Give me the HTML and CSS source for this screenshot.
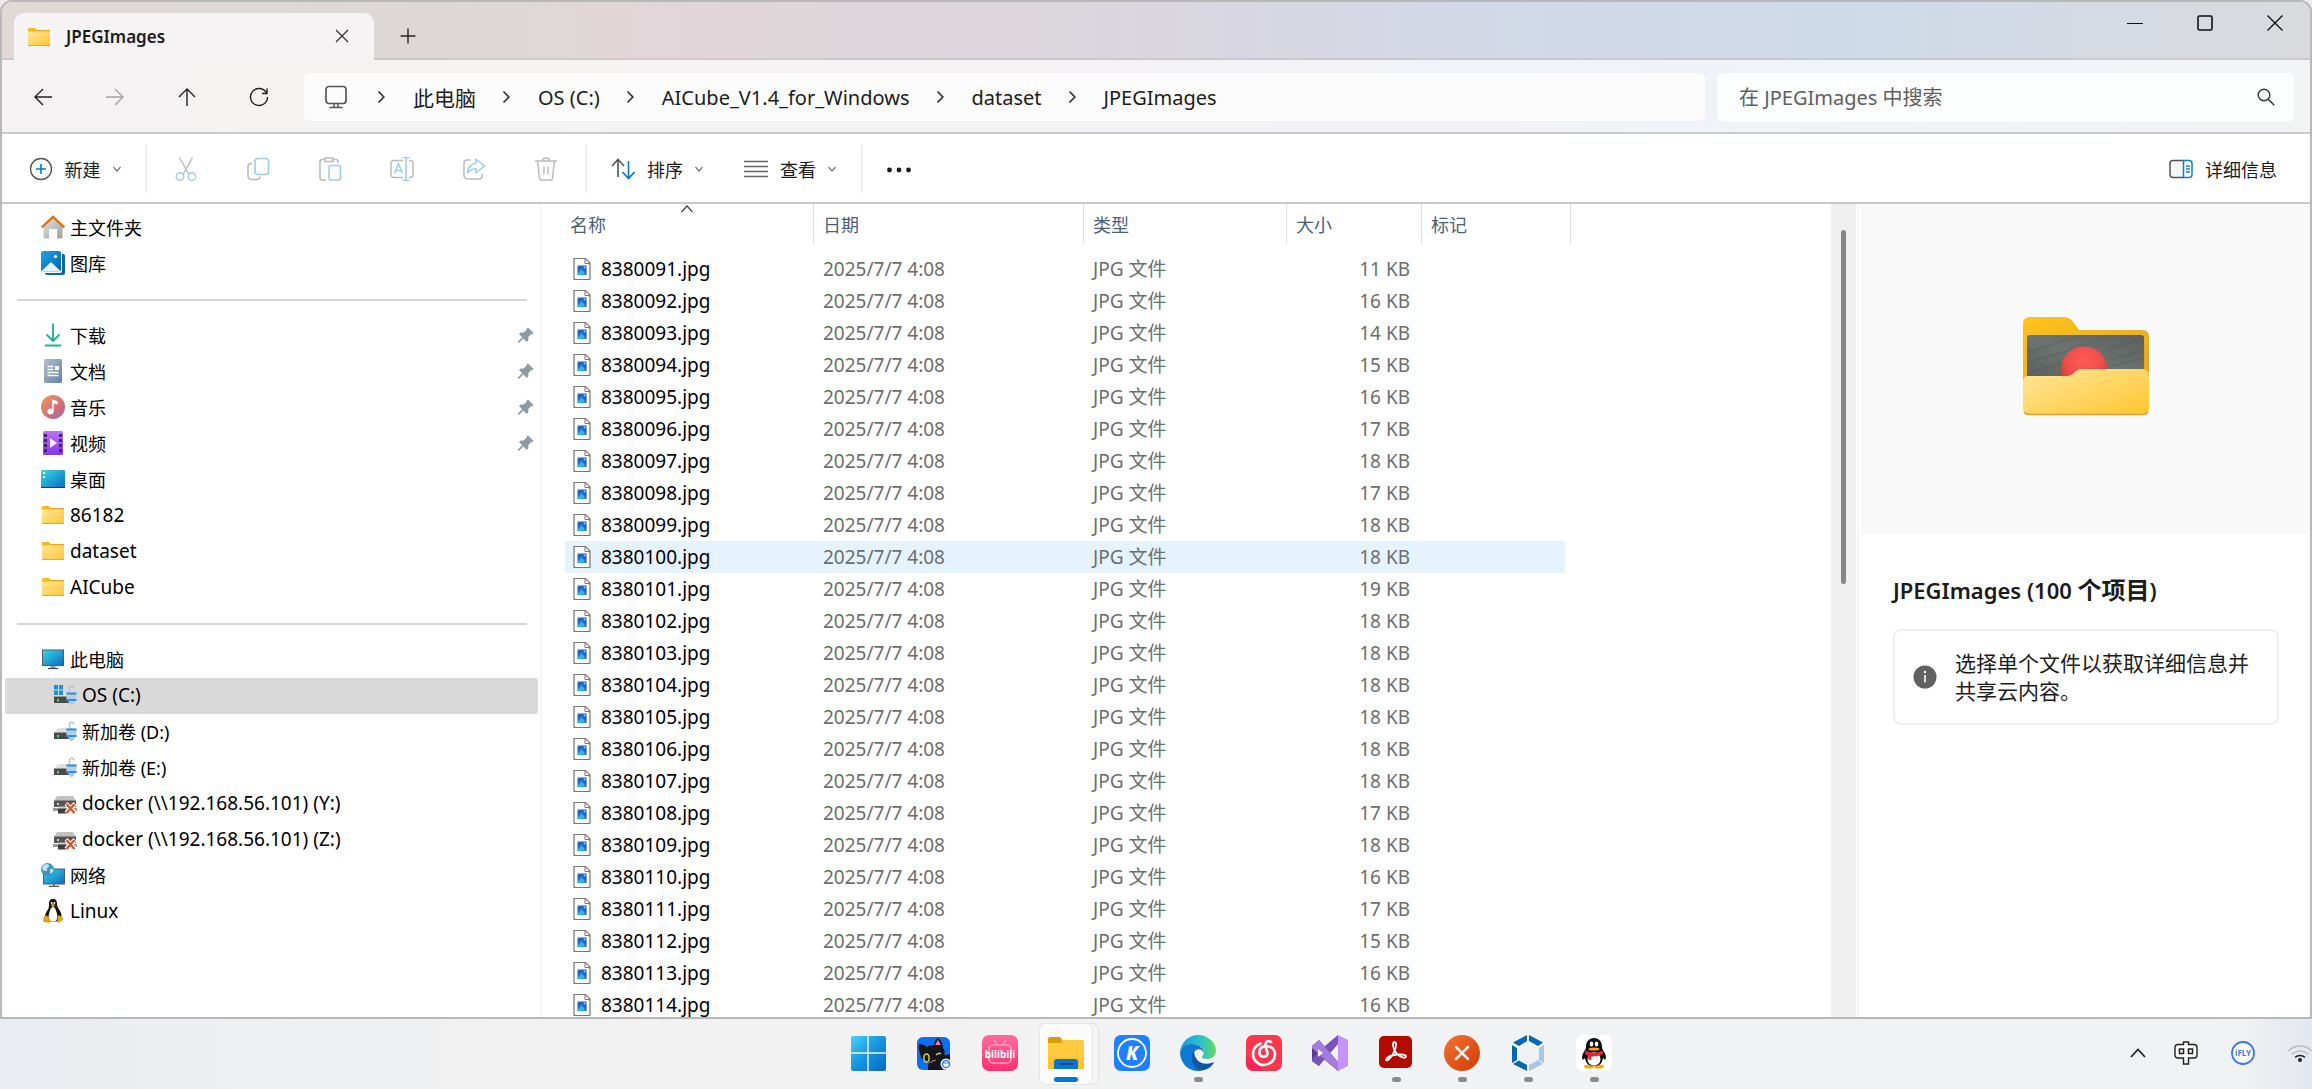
FILE: index.html
```html
<!DOCTYPE html>
<html lang="zh-CN">
<head>
<meta charset="utf-8">
<title>JPEGImages</title>
<link rel="stylesheet" href="styles.css">
</head>
<body>
<svg class="defs" aria-hidden="true">
  <defs>
    <linearGradient id="gFolder" x1="0" y1="0" x2="1" y2="1"><stop offset="0" stop-color="#ffe69c"/><stop offset="1" stop-color="#ffc52e"/></linearGradient>
    <linearGradient id="gScreen" x1="0" y1="0" x2="1" y2="1"><stop offset="0" stop-color="#35d9e6"/><stop offset="1" stop-color="#0a6cc4"/></linearGradient>
    <linearGradient id="gBlue" x1="0" y1="0" x2="1" y2="1"><stop offset="0" stop-color="#1ba5ea"/><stop offset="1" stop-color="#0561b4"/></linearGradient>
    <linearGradient id="gGrey" x1="0" y1="0" x2="1" y2="1"><stop offset="0" stop-color="#e2e2e2"/><stop offset="1" stop-color="#a0a0a0"/></linearGradient>
  </defs>
  <symbol id="chev-down" viewBox="0 0 8 8"><path d="M0.500 2l3.500 4 3.500-4" fill="none" stroke="#777" stroke-width="1.200"/></symbol>
  <symbol id="chev-right" viewBox="0 0 8 14"><path d="M1.500 1.500L6.800 7l-5.300 5.500" fill="none" stroke="#333" stroke-width="1.700"/></symbol>
  <symbol id="folder" viewBox="0 0 24 24"><path d="M1 4.500C1 3.500 1.500 3 2.300 3H8l2 2.500h13V12H1z" fill="#fbb914"/><path d="M1 6.500h22V20a1 1 0 0 1-1 1H2a1 1 0 0 1-1-1z" fill="url(#gFolder)"/><path d="M1 20.500h22" stroke="#eba926" stroke-width="1"/><path d="M9.500 5.500h13.500" stroke="#e9a81c"/></symbol>
  <symbol id="pin" viewBox="0 0 16 16"><path d="M10 0.500l5.500 5.500-1.300 1.400-1-.3-3 3.200.2 3-1.600 1.700-3.500-3.500L1.200 15.800H0v-1.200l4.300-4.300L1 7l1.600-1.500 3 .1 3.200-3-.2-1z" fill="#8f9aa3"/></symbol>
  <symbol id="drive" viewBox="0 0 24 24"><path d="M5 9h14l3 5H1z" fill="#dcdfe3"/><path d="M1 13.500h20V20H1z" fill="#4a4a4a"/><path d="M1 13.500h20" stroke="#999"/><rect x="4" y="16" width="2" height="2.500" fill="#3ee83e"/><path d="M16.500 9V5.500a2.200 2.200 0 0 1 4.400 0" fill="none" stroke="#b9c5d0" stroke-width="1.500"/><path d="M13.500 9.500h10V18h-10z" fill="#b0cfe8"/><path d="M13.500 9.500h10v2h-10zM13.500 16h10v2h-10z" fill="#2a92e0"/><path d="M15.500 18h6v2l-3 2.500-3-2.500z" fill="#b7c6d4"/></symbol>
  <symbol id="netdrive" viewBox="0 0 24 24"><path d="M4 5h16l3 5H1z" fill="#c2c2c2"/><path d="M1 9.500h22V16H1z" fill="#555"/><path d="M4 12h2v2H4z" fill="#ccc"/><path d="M0 18.500h6M12 18.500h12" stroke="#999" stroke-width="3"/><path d="M5 16h8v6.500H5z" fill="#3d3d3d"/><path d="M5 16.500h8" stroke="#ccc" stroke-width="2"/><path d="M13 12.500l9 9.500M22 12.500L13 22" stroke="#fff" stroke-width="4"/><path d="M13.500 13l8 9M21.500 13l-8 9" stroke="#e2531f" stroke-width="2.400"/></symbol>
  <symbol id="jpg" viewBox="0 0 18 24"><path d="M1 1.500h11.500L17 6v16.500H1z" fill="#fafafa" stroke="#777" stroke-width="1.200"/><path d="M12 1.500V6.500h5" fill="none" stroke="#777"/><rect x="4.500" y="8.500" width="9" height="9.500" rx="1" fill="#2266bd"/><path d="M4.500 16.500l4-4.500 3 3.500v2.500h-7z" fill="#25b2f4"/><path d="M11.500 15l2 2v-3z" fill="#6c55b8"/><circle cx="11.500" cy="10.500" r=".8" fill="#fff"/></symbol>
</svg>

<main class="window">
  <header class="titlebar">
    <div class="tab">
      <svg class="i24"><use href="#folder"/></svg>
      <span class="tab-name">JPEGImages</span>
      <button class="tab-close" aria-label="关闭标签页"><svg width="14" height="14" viewBox="0 0 14 14"><path d="M1 1l12 12M13 1L1 13" stroke="#333" stroke-width="1.300"/></svg></button>
    </div>
    <button class="tab-add" aria-label="新标签页"><svg width="16" height="16" viewBox="0 0 16 16"><path d="M8 0.500v15M0.500 8h15" stroke="#222" stroke-width="1.400"/></svg></button>
    <div class="controls">
      <button aria-label="最小化"><svg width="16" height="16" viewBox="0 0 16 16"><path d="M0 8.500h16" stroke="#111"/></svg></button>
      <button aria-label="最大化"><svg width="16" height="16" viewBox="0 0 16 16"><rect x="1" y="1" width="14" height="14" rx="1.500" fill="none" stroke="#111" stroke-width="1.600"/></svg></button>
      <button aria-label="关闭"><svg width="16" height="16" viewBox="0 0 16 16"><path d="M0.500 0.500l15 15M15.500 0.500l-15 15" stroke="#111" stroke-width="1.400"/></svg></button>
    </div>
  </header>

  <div class="navbar">
    <div class="nav-buttons">
      <button aria-label="后退"><svg width="18" height="18" viewBox="0 0 18 18"><path d="M9 1L1 9l8 8M1 9h17" fill="none" stroke="#222" stroke-width="1.400"/></svg></button>
      <button aria-label="前进"><svg width="18" height="18" viewBox="0 0 18 18"><path d="M9 1l8 8-8 8M17 9H0" fill="none" stroke="#a3a1a3" stroke-width="1.400"/></svg></button>
      <button aria-label="向上"><svg width="18" height="18" viewBox="0 0 18 18"><path d="M1 9l8-8 8 8M9 1v17" fill="none" stroke="#222" stroke-width="1.400"/></svg></button>
      <button aria-label="刷新"><svg width="20" height="20" viewBox="0 0 20 20"><path d="M17.500 6A8.500 8.500 0 1 0 18.500 10M18 1.500V6.500h-5" fill="none" stroke="#222" stroke-width="1.400"/></svg></button>
    </div>
    <nav class="address" aria-label="地址">
      <svg class="monitor" width="24" height="24" viewBox="0 0 24 24"><rect x="2" y="1.500" width="20" height="17" rx="3" fill="none" stroke="#555" stroke-width="1.700"/><path d="M10 19v3M14 19v3M5.500 22.500h13" stroke="#555" stroke-width="1.500"/></svg>
      <svg class="sep"><use href="#chev-right"/></svg><a class="cjk" href="#">此电脑</a>
      <svg class="sep"><use href="#chev-right"/></svg><a href="#">OS (C:)</a>
      <svg class="sep"><use href="#chev-right"/></svg><a href="#">AICube_V1.4_for_Windows</a>
      <svg class="sep"><use href="#chev-right"/></svg><a href="#">dataset</a>
      <svg class="sep"><use href="#chev-right"/></svg><a href="#">JPEGImages</a>
    </nav>
    <label class="search">
      <input type="text" placeholder="在 JPEGImages 中搜索" aria-label="搜索">
      <svg width="18" height="18" viewBox="0 0 18 18"><circle cx="7" cy="7" r="5.800" fill="none" stroke="#333" stroke-width="1.400"/><path d="M11.200 11.200l6 6" stroke="#333" stroke-width="1.500"/></svg>
    </label>
  </div>

  <div class="toolbar">
    <button class="tool new"><svg width="24" height="24" viewBox="0 0 24 24"><circle cx="12" cy="12" r="10.500" fill="none" stroke="#555" stroke-width="1.400"/><path d="M12 7v10M7 12h10" stroke="#0078d4" stroke-width="1.600"/></svg>新建<svg class="caret"><use href="#chev-down"/></svg></button>
    <span class="bar"></span>
    <div class="icon-tools">
      <button aria-label="剪切" disabled><svg class="i24" viewBox="0 0 24 24" fill="none" stroke-width="1.400"><path d="M5.500 0.500l9.500 17M18.500 0.500L9 17.500" stroke="#bbb"/><circle cx="6" cy="19.500" r="3.800" stroke="#9cccf2"/><circle cx="18" cy="19.500" r="3.800" stroke="#9cccf2"/></svg></button>
      <button aria-label="复制" disabled><svg class="i24" viewBox="0 0 24 24" fill="none" stroke-width="1.600"><path d="M6 6.500H5a3 3 0 0 0-3 3V19a3.500 3.500 0 0 0 3.500 3.500H11a3 3 0 0 0 3-3" stroke="#bbb"/><rect x="9" y="1.500" width="13.500" height="16" rx="3" stroke="#9cccf2"/></svg></button>
      <button aria-label="粘贴" disabled><svg class="i24" viewBox="0 0 24 24" fill="none" stroke-width="1.600"><path d="M8 23H4a2 2 0 0 1-2-2V4.500a2 2 0 0 1 2-2h3M15 2.500h3a2 2 0 0 1 2 2V6M7 1h8v3.500H7z" stroke="#bbb"/><rect x="11" y="8.500" width="11.500" height="14.500" rx="2" stroke="#9cccf2"/></svg></button>
      <button aria-label="重命名" disabled><svg class="i24" viewBox="0 0 24 24" fill="none" stroke-width="1.500"><path d="M13 3.500H4a3 3 0 0 0-3 3v11a3 3 0 0 0 3 3h9M19 3.500h1a3 3 0 0 1 3 3v11a3 3 0 0 1-3 3h-1" stroke="#bbb"/><path d="M16 0.500V23.500M12.500 0.500h7M12.500 23.500h7M4.500 16.500l4-10 4 10M6 13.500h5" stroke="#9cccf2"/></svg></button>
      <button aria-label="共享" disabled><svg class="i24" viewBox="0 0 24 24" fill="none" stroke-width="1.500" stroke-linejoin="round"><path d="M8.500 3H5a3 3 0 0 0-3 3v12.500a3.500 3.500 0 0 0 3.500 3.500H17a3 3 0 0 0 3-3v-2" stroke="#bbb"/><path d="M14 2l8.500 7-8.500 7v-4.300c-4 0-6.500 1.300-8.500 4.300 .5-5.500 3.500-9.300 8.500-9.800z" stroke="#9cccf2"/></svg></button>
      <button aria-label="删除" disabled><svg class="i24" viewBox="0 0 24 24" fill="none" stroke="#bbb" stroke-width="1.500"><path d="M1 4h22M8.500 4a3.500 3 0 0 1 7 0M3.500 4l2 17a2 2 0 0 0 2 2h9a2 2 0 0 0 2-2l2-17M10 9.500v8M14 9.500v8"/></svg></button>
    </div>
    <span class="bar"></span>
    <button class="tool sort"><svg class="i24" viewBox="0 0 24 24" fill="none" stroke-width="1.600"><path d="M1 9l6-6.500L13 9M7 3v17" stroke="#555"/><path d="M11.500 15l6 6.500 6-6.500M17.500 21V4" stroke="#0078d4"/></svg>排序<svg class="caret"><use href="#chev-down"/></svg></button>
    <button class="tool view"><svg class="i24" viewBox="0 0 24 24"><path d="M0 4.500h24M0 9.500h24M0 14.500h24M0 19.500h24" stroke="#666" stroke-width="1.300"/></svg>查看<svg class="caret"><use href="#chev-down"/></svg></button>
    <span class="bar"></span>
    <button class="tool more" aria-label="更多"><svg class="i24" viewBox="0 0 24 24" fill="#1a1a1a"><circle cx="2.500" cy="13" r="2.400"/><circle cx="12" cy="13" r="2.400"/><circle cx="21.500" cy="13" r="2.400"/></svg></button>
    <button class="tool details-toggle"><svg class="i24" viewBox="0 0 24 24" fill="none" stroke-width="1.500"><path d="M14.500 3.500H4a3 3 0 0 0-3 3v11a3 3 0 0 0 3 3h10.500" stroke="#555" fill="#f5f5f5"/><path d="M14.500 3.500H20a3 3 0 0 1 3 3v11a3 3 0 0 1-3 3h-5.500zM17 9h4M17 12h4M17 15h4" stroke="#0f7fd6"/></svg>详细信息</button>
  </div>

  <div class="content">
    <nav class="sidebar" aria-label="导航窗格">
      <ul>
        <li><a href="#"><svg class="i24" viewBox="0 0 24 24"><path d="M2.500 11L12 2.500l9.500 8.500V22a1.500 1.500 0 0 1-1.500 1.500h-4V14H8v9.500H4A1.500 1.500 0 0 1 2.500 22z" fill="url(#gGrey)"/><path d="M0.800 12.500L12 1.800l11.200 10.700" fill="none" stroke="#e5700f" stroke-width="2.400"/></svg>主文件夹</a></li>
        <li><a href="#"><svg class="i24" viewBox="0 0 24 24"><rect x="4" y="3" width="20" height="21" rx="2" fill="#0b65b5"/><rect x="0" y="0" width="21" height="22" rx="2" fill="#fff"/><rect x="0" y="0" width="20" height="20.500" rx="2" fill="url(#gBlue)"/><path d="M0.500 20l9.500-9 9.500 9a2 2 0 0 1-1 .5h-17z" fill="#e3f2fc"/><circle cx="14.500" cy="5.500" r="1.600" fill="#fff"/></svg>图库</a></li>
      </ul>
      <hr>
      <ul>
        <li><a href="#"><svg class="i24" viewBox="0 0 24 24" fill="none" stroke="#17b494" stroke-width="1.800"><path d="M12 0.500v17M5.500 11.500L12 18l6.500-6.500M4 22.500h16"/></svg>下载<svg class="pin"><use href="#pin"/></svg></a></li>
        <li><a href="#"><svg class="i24" viewBox="0 0 24 24"><defs><linearGradient id="gDoc" x1="0" y1="0" x2="1" y2="1"><stop offset="0" stop-color="#aebfd2"/><stop offset="1" stop-color="#6283a8"/></linearGradient></defs><rect x="3" y="0" width="18" height="24" rx="1.500" fill="url(#gDoc)"/><path d="M6.500 7.500h6M6.500 10.500h6M6.500 13.500h11M6.500 16.500h11" stroke="#fff" stroke-width="1.300"/><rect x="14" y="7" width="4" height="4" fill="#fff"/></svg>文档<svg class="pin"><use href="#pin"/></svg></a></li>
        <li><a href="#"><svg class="i24" viewBox="0 0 24 24"><defs><linearGradient id="gMus" x1="0" y1="0" x2="1" y2="1"><stop offset="0" stop-color="#f5965e"/><stop offset=".6" stop-color="#d56f79"/><stop offset="1" stop-color="#9c5cb5"/></linearGradient></defs><circle cx="12" cy="12" r="12" fill="url(#gMus)"/><circle cx="9.500" cy="16.500" r="3" fill="#fff"/><path d="M11.200 16.500V4.500l5.500 1.700v3.300l-4-1v8z" fill="#fff"/></svg>音乐<svg class="pin"><use href="#pin"/></svg></a></li>
        <li><a href="#"><svg class="i24" viewBox="0 0 24 24"><defs><linearGradient id="gVid" x1="0" y1="0" x2="0" y2="1"><stop offset="0" stop-color="#ba74f4"/><stop offset="1" stop-color="#8336e6"/></linearGradient></defs><rect x="2" y="0" width="20" height="24" rx="1.500" fill="url(#gVid)"/><path d="M4.500 3v20M19.500 3v20" stroke="#432266" stroke-width="3" stroke-dasharray="3 2"/><path d="M9 7v10l7-5z" fill="#f4ecfc"/></svg>视频<svg class="pin"><use href="#pin"/></svg></a></li>
        <li><a href="#"><svg class="i24" viewBox="0 0 24 24"><rect x="0" y="3" width="24" height="18" rx="1" fill="url(#gScreen)"/><path d="M0 20.500h24" stroke="#0b3f6c"/><path d="M2 5h2v2H2zM2 9h2v2H2z" fill="#fff"/></svg>桌面</a></li>
        <li><a class="latin" href="#"><svg class="i24"><use href="#folder"/></svg>86182</a></li>
        <li><a class="latin" href="#"><svg class="i24"><use href="#folder"/></svg>dataset</a></li>
        <li><a class="latin" href="#"><svg class="i24"><use href="#folder"/></svg>AICube</a></li>
      </ul>
      <hr>
      <ul>
        <li><a href="#"><svg class="i24" viewBox="0 0 24 24"><rect x="1.500" y="3" width="21" height="15.500" fill="url(#gScreen)" stroke="#46606e"/><path d="M9.500 19h5v2h-5z" fill="#99a"/><path d="M7 21.500h10" stroke="#444" stroke-width="1.200"/></svg>此电脑</a></li>
        <li><a class="sub latin selected" href="#"><svg class="i24"><use href="#drive"/><path d="M1 2h4v4.500H1zM6 2h4v4.500H6zM1 7.500h4V12H1zM6 7.500h4V12H6z" fill="#1593e6"/></svg>OS (C:)</a></li>
        <li><a class="sub" href="#"><svg class="i24"><use href="#drive"/></svg>新加卷 (D:)</a></li>
        <li><a class="sub" href="#"><svg class="i24"><use href="#drive"/></svg>新加卷 (E:)</a></li>
        <li><a class="sub latin" href="#"><svg class="i24"><use href="#netdrive"/></svg>docker (\\192.168.56.101) (Y:)</a></li>
        <li><a class="sub latin" href="#"><svg class="i24"><use href="#netdrive"/></svg>docker (\\192.168.56.101) (Z:)</a></li>
        <li><a href="#"><svg class="i24" viewBox="0 0 24 24"><rect x="2.500" y="6" width="21" height="15" fill="url(#gScreen)" stroke="#46606e"/><path d="M8 23.500h10M13 21v2" stroke="#555" stroke-width="1.500"/><circle cx="6.500" cy="6.500" r="6.500" fill="#3d94bd"/><path d="M2 3c3-3 6-2 6 0s-3 2-2 4-4 1-5-1zM9 6c3-1 4 0 3 3l-3 2z" fill="#bfe3ef"/></svg>网络</a></li>
        <li><a class="latin" href="#"><svg class="i24" viewBox="0 0 24 24"><path d="M12 0c3 0 4 2 4 5s1 4 3 7 2 7 0 9-12 2-14 0-1-6 1-9 2-4 2-7 1-5 4-5z" fill="#111"/><path d="M12 8c2 0 2.500 2 3.500 5s1.500 6 0 8-5.500 2-7 0-1-5 0-8 1.500-5 3.500-5z" fill="#fff"/><path d="M9.500 6L12 4.800 14.500 6 12 8.300zM3 17l3-.5 4 5.500-2 2-6-1.500zM21 17l-4-.5-1 6 1.500 1.500 5-3.500z" fill="#dba41c"/><circle cx="10.700" cy="4" r="1" fill="#fff"/><circle cx="13.400" cy="4" r="1" fill="#fff"/></svg>Linux</a></li>
      </ul>
    </nav>

    <section class="files">
      <table>
        <colgroup><col class="c-name"><col class="c-date"><col class="c-type"><col class="c-size"><col class="c-tag"></colgroup>
        <thead>
          <tr>
            <th><span>名称<svg class="sorted" viewBox="0 0 12 8"><path d="M0.500 7L6 1l5.500 6" fill="none" stroke="#444" stroke-width="1.200"/></svg></span></th>
            <th><span>日期</span></th><th><span>类型</span></th><th><span>大小</span></th><th><span>标记</span></th>
          </tr>
        </thead>
        <tbody>
          <tr><td><svg><use href="#jpg"/></svg>8380091.jpg</td><td>2025/7/7 4:08</td><td>JPG 文件</td><td>11 KB</td><td></td></tr>
          <tr><td><svg><use href="#jpg"/></svg>8380092.jpg</td><td>2025/7/7 4:08</td><td>JPG 文件</td><td>16 KB</td><td></td></tr>
          <tr><td><svg><use href="#jpg"/></svg>8380093.jpg</td><td>2025/7/7 4:08</td><td>JPG 文件</td><td>14 KB</td><td></td></tr>
          <tr><td><svg><use href="#jpg"/></svg>8380094.jpg</td><td>2025/7/7 4:08</td><td>JPG 文件</td><td>15 KB</td><td></td></tr>
          <tr><td><svg><use href="#jpg"/></svg>8380095.jpg</td><td>2025/7/7 4:08</td><td>JPG 文件</td><td>16 KB</td><td></td></tr>
          <tr><td><svg><use href="#jpg"/></svg>8380096.jpg</td><td>2025/7/7 4:08</td><td>JPG 文件</td><td>17 KB</td><td></td></tr>
          <tr><td><svg><use href="#jpg"/></svg>8380097.jpg</td><td>2025/7/7 4:08</td><td>JPG 文件</td><td>18 KB</td><td></td></tr>
          <tr><td><svg><use href="#jpg"/></svg>8380098.jpg</td><td>2025/7/7 4:08</td><td>JPG 文件</td><td>17 KB</td><td></td></tr>
          <tr><td><svg><use href="#jpg"/></svg>8380099.jpg</td><td>2025/7/7 4:08</td><td>JPG 文件</td><td>18 KB</td><td></td></tr>
          <tr class="hover"><td><svg><use href="#jpg"/></svg>8380100.jpg</td><td>2025/7/7 4:08</td><td>JPG 文件</td><td>18 KB</td><td></td></tr>
          <tr><td><svg><use href="#jpg"/></svg>8380101.jpg</td><td>2025/7/7 4:08</td><td>JPG 文件</td><td>19 KB</td><td></td></tr>
          <tr><td><svg><use href="#jpg"/></svg>8380102.jpg</td><td>2025/7/7 4:08</td><td>JPG 文件</td><td>18 KB</td><td></td></tr>
          <tr><td><svg><use href="#jpg"/></svg>8380103.jpg</td><td>2025/7/7 4:08</td><td>JPG 文件</td><td>18 KB</td><td></td></tr>
          <tr><td><svg><use href="#jpg"/></svg>8380104.jpg</td><td>2025/7/7 4:08</td><td>JPG 文件</td><td>18 KB</td><td></td></tr>
          <tr><td><svg><use href="#jpg"/></svg>8380105.jpg</td><td>2025/7/7 4:08</td><td>JPG 文件</td><td>18 KB</td><td></td></tr>
          <tr><td><svg><use href="#jpg"/></svg>8380106.jpg</td><td>2025/7/7 4:08</td><td>JPG 文件</td><td>18 KB</td><td></td></tr>
          <tr><td><svg><use href="#jpg"/></svg>8380107.jpg</td><td>2025/7/7 4:08</td><td>JPG 文件</td><td>18 KB</td><td></td></tr>
          <tr><td><svg><use href="#jpg"/></svg>8380108.jpg</td><td>2025/7/7 4:08</td><td>JPG 文件</td><td>17 KB</td><td></td></tr>
          <tr><td><svg><use href="#jpg"/></svg>8380109.jpg</td><td>2025/7/7 4:08</td><td>JPG 文件</td><td>18 KB</td><td></td></tr>
          <tr><td><svg><use href="#jpg"/></svg>8380110.jpg</td><td>2025/7/7 4:08</td><td>JPG 文件</td><td>16 KB</td><td></td></tr>
          <tr><td><svg><use href="#jpg"/></svg>8380111.jpg</td><td>2025/7/7 4:08</td><td>JPG 文件</td><td>17 KB</td><td></td></tr>
          <tr><td><svg><use href="#jpg"/></svg>8380112.jpg</td><td>2025/7/7 4:08</td><td>JPG 文件</td><td>15 KB</td><td></td></tr>
          <tr><td><svg><use href="#jpg"/></svg>8380113.jpg</td><td>2025/7/7 4:08</td><td>JPG 文件</td><td>16 KB</td><td></td></tr>
          <tr><td><svg><use href="#jpg"/></svg>8380114.jpg</td><td>2025/7/7 4:08</td><td>JPG 文件</td><td>16 KB</td><td></td></tr>
        </tbody>
      </table>
    </section>
    <div class="scrollbar"><div class="thumb"></div></div>

    <aside class="details">
      <div class="preview">
        <svg width="128" height="100" viewBox="0 0 128 100">
          <defs>
            <linearGradient id="gBack" x1="0" y1="0" x2="1" y2="1"><stop offset="0" stop-color="#ffc31a"/><stop offset="1" stop-color="#e3a22a"/></linearGradient>
            <linearGradient id="gWood" x1="0" y1="1" x2="1" y2="0"><stop offset="0" stop-color="#59605f"/><stop offset=".5" stop-color="#6c7370"/><stop offset="1" stop-color="#5c5f5d"/></linearGradient>
            <radialGradient id="gBall" cx=".5" cy=".3" r=".7"><stop offset="0" stop-color="#ff5b55"/><stop offset=".6" stop-color="#ec4c48"/><stop offset="1" stop-color="#a53433"/></radialGradient>
          </defs>
          <path d="M1 7a6 6 0 0 1 6-6h34c5 0 8 2 11 6l5 7h64a6 6 0 0 1 6 6v50H1z" fill="url(#gBack)"/>
          <path d="M5 22a3 3 0 0 1 3-3h111a3 3 0 0 1 3 3v42H5z" fill="url(#gWood)"/>
          <path d="M6 36l48-15M6 46l60-17M8 56l32-9M86 34l34-13M88 44l34-10M90 50l32-8" stroke="#515855" stroke-width="1.500" opacity=".4"/>
          <circle cx="62" cy="54" r="23.500" fill="url(#gBall)"/>
          <path d="M1 65a5 5 0 0 1 5-5h38c5 0 7-2 9-4 2-2 4-3 7-3h61a6 6 0 0 1 6 6v34a6 6 0 0 1-6 6H7a6 6 0 0 1-6-6z" fill="url(#gFolder)"/>
          <path d="M2 96q2 2.500 5 2.500h114q3 0 5-2.500" fill="none" stroke="#dfa027" stroke-width="1.500"/>
        </svg>
      </div>
      <div class="info">
        <h2>JPEGImages (100 <span class="cjk">个项目</span>)</h2>
        <div class="tip">
          <svg class="i24" viewBox="0 0 24 24"><circle cx="12" cy="12" r="11.500" fill="#616161"/><circle cx="12" cy="7" r="1.200" fill="#fff"/><path d="M12 10v7.500" stroke="#fff" stroke-width="1.600"/></svg>
          <p>选择单个文件以获取详细信息并共享云内容。</p>
        </div>
      </div>
    </aside>
  </div>
</main>

<footer class="taskbar">
  <div class="apps">
    <button class="app" aria-label="开始"><svg viewBox="0 0 36 36"><defs><linearGradient id="gWin" x1="0" y1="0" x2="1" y2="1"><stop offset="0" stop-color="#48d1fb"/><stop offset=".5" stop-color="#1594dc"/><stop offset="1" stop-color="#0669c4"/></linearGradient></defs><path d="M1 3a2 2 0 0 1 2-2h14.300v16.300H1zM18.700 1H34a2 2 0 0 1 2 2v14.300H18.700zM1 18.700h16.300V36H3a2 2 0 0 1-2-2zM18.700 18.700H36V34a2 2 0 0 1-2 2H18.700z" fill="url(#gWin)"/></svg></button>
    <button class="app" aria-label="猫"><svg viewBox="0 0 36 36"><rect x="1" y="2" width="33" height="33" rx="6" fill="#0a6ff5"/><path d="M3 9c3 0 6 1 8 3 3-2 5-2 7-2 0-3 2-6 4-7 3 2 5 6 5 10 2 2 2 5 1 7l6-1v7c-2 5-5 9-10 9l-12 0c0-3 0-5 1-7-5-1-9-5-9-10C3 15 2 12 3 9z" fill="#15161a"/><ellipse cx="10.500" cy="23" rx="2.600" ry="4" fill="none" stroke="#d3cf53" stroke-width="1.500"/><path d="M20 20c2-2 4-2 5-1" fill="none" stroke="#d3cf53" stroke-width="1.300"/><path d="M19 10l3-5 3 5z" fill="#f77fa5"/><path d="M13 27c2 1 4 0 4-2 1 1 2 1 3 0" fill="none" stroke="#f77fa5"/><circle cx="30" cy="29" r="5.500" fill="#fff"/><circle cx="30" cy="29" r="3.600" fill="none" stroke="#2a80f4" stroke-width="1.500"/><path d="M27 28h6" stroke="#2a80f4"/></svg></button>
    <button class="app" aria-label="哔哩哔哩"><svg viewBox="0 0 36 36"><defs><linearGradient id="gBili" x1="0" y1="0" x2="0" y2="1"><stop offset="0" stop-color="#ff6b9c"/><stop offset="1" stop-color="#ff2f70"/></linearGradient></defs><rect width="36" height="36" rx="7" fill="url(#gBili)"/><rect x="7" y="10" width="22" height="18" rx="4" fill="none" stroke="#ff8fb2" stroke-width="2"/><path d="M12 5l4 5M24 5l-4 5" stroke="#ff8fb2" stroke-width="2"/><text x="18" y="23" text-anchor="middle" font-size="10" font-weight="700" fill="#fff">bilibili</text></svg></button>
    <button class="app active" aria-label="文件资源管理器"><svg viewBox="0 0 36 36"><path d="M0 4a2 2 0 0 1 2-2h10l3 4v6H0z" fill="#dc9c0a"/><path d="M0 8h13l2-3h19a2 2 0 0 1 2 2v27H0z" fill="#fdca3e"/><path d="M0 22h36v10a2 2 0 0 1-2 2H2a2 2 0 0 1-2-2z" fill="#fbbd22" opacity=".5"/><path d="M6 34V27a3 3 0 0 1 3-3h18a3 3 0 0 1 3 3v7z" fill="#0b74cb"/><path d="M11 29h14" stroke="#06478a" stroke-width="1.500"/></svg></button>
    <button class="app" aria-label="K"><svg viewBox="0 0 36 36"><rect width="36" height="36" rx="7" fill="#1f80ff"/><circle cx="18" cy="18" r="14" fill="none" stroke="#fff" stroke-width="1.800"/><text x="18" y="25" text-anchor="middle" font-size="19" font-weight="800" font-style="italic" fill="#fff">K</text></svg></button>
    <button class="app run" aria-label="Edge"><svg viewBox="0 0 36 36"><defs><linearGradient id="gEdge" x1="0" y1="0" x2="1" y2="0"><stop offset="0" stop-color="#1b9be0"/><stop offset=".6" stop-color="#2fc2cb"/><stop offset="1" stop-color="#62dc53"/></linearGradient></defs><path d="M0 17C1 7 9 0 18 0c10 0 18 8 18 15 0 6-4 9-9 9-3 0-5-1-5-2s2-2 2-5c0-4-5-8-11-8S1 12 0 17z" fill="url(#gEdge)"/><path d="M0 17c2-6 7-8 12-8 7 0 12 4 12 9-2-4-6-5-9-2-4 4-2 13 6 19-1 1-2 1-3 1C8 36 0 28 0 17z" fill="#0c7cd2"/><path d="M14 16c-5 6-2 17 7 19.700C27 35 31 32 33.500 28.500c.5-1 0-1.500-1-1-8 3.500-18 0-18.500-11.500z" fill="#1156a5"/></svg></button>
    <button class="app" aria-label="网易云音乐"><svg viewBox="0 0 36 36"><rect width="36" height="36" rx="7" fill="#fb374b"/><path d="M0 20v9a7 7 0 0 0 7 7h12z" fill="#ff1468" opacity=".5"/><path d="M14.500 8.500C10 10.500 7 14 7 19a11 11 0 0 0 22 0c0-5-4-8-9-8-4 0-7 3-6.500 7 .5 5 8.500 5 8 0L19.500 11c-.8-4 2.500-6 5.500-4" fill="none" stroke="#fff" stroke-width="2.600" stroke-linecap="round"/></svg></button>
    <button class="app" aria-label="Visual Studio"><svg viewBox="0 0 36 36"><path d="M0 11l7-6 19 22v9L7 20v0L7 31l-7-5z" fill="#54388a"/><path d="M0 26l7 5L26 9V0L7 16 0 24z" fill="#7a52bd"/><path d="M7 5l19 22v9L0 13v-2z" fill="#a57bdf"/><path d="M6 14v8l5-4z" fill="#f1f1f2"/><path d="M26 0l10 5v26l-10 5z" fill="#c592fa"/></svg></button>
    <button class="app run" aria-label="Acrobat"><svg viewBox="0 0 36 36"><rect x="1" y="1" width="33" height="32" rx="5" fill="#b30b00"/><path d="M8 25c1-3 6-5 11-5.500 5-.5 9 0 9 2s-4 1.500-7-1c-4-3-6-8-6-11s3-3 3 0-2 8-4 11-5 6-6 4.500z" fill="none" stroke="#fff" stroke-width="1.800"/></svg></button>
    <button class="app run" aria-label="XMind"><svg viewBox="0 0 36 36"><defs><linearGradient id="gOr" x1="0" y1="0" x2="1" y2="1"><stop offset="0" stop-color="#f47234"/><stop offset="1" stop-color="#cf3b05"/></linearGradient></defs><circle cx="18" cy="18" r="18" fill="url(#gOr)"/><path d="M12 12l12 12M24 12L12 24" stroke="#fdeee6" stroke-width="2.500" stroke-linecap="round"/></svg></button>
    <button class="app run" aria-label="Cube"><svg viewBox="0 0 36 36"><path d="M17 0v6l-8 5-6-3.500zM2 10l5 3v12l-5 3zM3 29l6-3.500 8 4.500v6zM19 0l14 7.500-5 3.500-9-5z" fill="#0868b4"/><path d="M34 10v18l-5-3V13zM33 29l-14 7v-6l9-5z" fill="#a6c7e8"/></svg></button>
    <button class="app run" aria-label="QQ"><svg viewBox="0 0 36 36"><rect width="36" height="36" rx="7" fill="#fff"/><ellipse cx="13" cy="31.500" rx="5" ry="2" fill="#f9a70e"/><ellipse cx="23" cy="31.500" rx="5" ry="2" fill="#f9a70e"/><path d="M18 3c5 0 8 3.500 8 9 0 3 4 6 4 11-1 3-2 1-3 0-1 6-4 8-9 8s-8-2-9-8c-1 1-2 3-3 0 0-5 4-8 4-11 0-5.500 3-9 8-9z" fill="#0c0c0c"/><ellipse cx="18" cy="24" rx="6.500" ry="6.800" fill="#fff"/><path d="M9.500 15.500q8.500 4.500 17 0l.8 3.500q-7 3-12 2.500l0 3.500-3-.5v-3.500l-3.500-2z" fill="#e8242c"/><ellipse cx="15.500" cy="9" rx="1.800" ry="2.600" fill="#fff"/><ellipse cx="20.500" cy="9" rx="1.800" ry="2.600" fill="#fff"/><ellipse cx="18" cy="14" rx="5.500" ry="1.600" fill="#f9a70e"/></svg></button>
  </div>
  <div class="tray">
    <svg class="up" viewBox="0 0 16 10"><path d="M1 9l7-7.500L15 9" fill="none" stroke="#222" stroke-width="1.700"/></svg>
    <svg class="ime" viewBox="0 0 24 24"><path d="M4 3.500h5.500V1h5v2.500H20a3 3 0 0 1 3 3V14a3 3 0 0 1-3 3h-5.500v6h-5v-6H4a3 3 0 0 1-3-3V6.500a3 3 0 0 1 3-3z" fill="#fff" stroke="#222" stroke-width="1.400"/><path d="M5.500 8h4v4.500h-4zM14.500 8h4v4.500h-4z" fill="none" stroke="#222" stroke-width="1.600"/></svg>
    <svg class="ifly" viewBox="0 0 24 24"><circle cx="12" cy="12" r="11" fill="#fff" stroke="#3b76f6" stroke-width="1.800"/><text x="12" y="15" text-anchor="middle" font-size="8" font-weight="700" fill="#3b76f6">iFLY</text></svg>
    <svg class="wifi" viewBox="0 0 24 20"><path d="M0.500 8a16 16 0 0 1 23 0M4 11.500a11 11 0 0 1 16 0" fill="none" stroke="#bbb" stroke-width="1.500"/><path d="M7 14.500a7 7 0 0 1 10 0" fill="none" stroke="#222" stroke-width="1.500"/><circle cx="12" cy="17" r="2" fill="#222"/></svg>
  </div>
</footer>
</body>
</html>
```
FILE: styles.css
```css
* { box-sizing: border-box; }

html, body { height: 100%; margin: 0; }

body {
  display: flex;
  flex-direction: column;
  overflow: hidden;
  background: #ececec;
  color: #1b1b1b;
  font-family: "Noto Sans", "Noto Sans CJK SC", sans-serif;
  font-size: 18px;
}

button {
  display: flex;
  align-items: center;
  justify-content: center;
  padding: 0;
  border: 0;
  background: none;
  color: inherit;
  font: inherit;
}

a { color: inherit; text-decoration: none; }
svg { display: block; flex: none; }
.defs { position: absolute; width: 0; height: 0; }
.i24 { width: 24px; height: 24px; }

/* Window frame */
.window {
  flex: 1;
  min-height: 0;
  display: flex;
  flex-direction: column;
  border: 2px solid #b9b8b8;
  border-radius: 12px 12px 0 0;
  overflow: hidden;
  background: #fff;
}

.titlebar {
  flex: none;
  display: flex;
  height: 58px;
  padding-left: 12px;
  border-bottom: 2px solid #cdc8ce;
  background: linear-gradient(90deg, #e0d9d6 0%, #ddd8d7 19%, #e1d6d9 28%, #ddd6dd 45%, #d2d9e8 66%, #cfdbe8 82%, #d5dae4 90%, #dadade 100%);
}

.tab {
  display: flex;
  align-items: center;
  width: 360px;
  height: 47px;
  margin-top: 11px;
  padding: 0 25px 0 13px;
  border-radius: 10px 10px 0 0;
  background: #f5f3f4;
}

.tab-name { flex: 1; margin-left: 15px; font-size: 17px; font-weight: 600; }
.tab-close { padding-bottom: 2px; }
.tab-add { width: 68px; margin-bottom: -12px; }
.controls { display: flex; height: 41px; margin-left: auto; }
.controls button { width: 70px; }

/* Navigation row */
.navbar {
  flex: none;
  display: flex;
  align-items: center;
  gap: 12px;
  height: 74px;
  padding: 2px 16px 0 0;
  border-bottom: 2px solid #cbc8ce;
  background: linear-gradient(90deg, #f5f2f4 0%, #f5f3f2 15%, #f5f2f4 45%, #eff3f9 72%, #f0f3f8 88%, #f3f3f4 100%);
}

.nav-buttons { display: flex; width: 290px; padding-left: 5px; }
.nav-buttons button { flex: none; width: 72px; height: 48px; }

.address {
  flex: 1;
  display: flex;
  align-items: center;
  height: 48px;
  padding-left: 20px;
  border-radius: 6px;
  background: #fcfcfd;
  font-size: 20px;
}

.address .cjk { font-size: 21px; }
.monitor { margin-right: 3px; }
.sep { width: 8px; height: 14px; margin: 0 28px 0 26px; }

.search {
  flex: none;
  display: flex;
  align-items: center;
  width: 577px;
  height: 49px;
  padding: 0 19px 0 20px;
  border-radius: 6px;
  background: #fcfdfd;
}

.search input {
  flex: 1;
  border: 0;
  outline: 0;
  background: none;
  font: inherit;
  font-size: 20px;
}

.search input::placeholder { color: #5f6062; }

/* Command bar */
.toolbar {
  flex: none;
  display: flex;
  align-items: center;
  height: 70px;
  padding-top: 2px;
  border-bottom: 2px solid #c9c7cc;
  background: #fff;
}

.tool { gap: 12px; }
.tool .caret { width: 8px; height: 8px; }
.new { width: 143px; padding-left: 2px; }
.bar { flex: none; width: 2px; height: 48px; background: #ededed; }
.icon-tools { display: flex; width: 438px; padding-left: 3px; }
.icon-tools button { width: 72px; height: 48px; }
.sort { width: 136px; padding-left: 4px; }
.view { width: 138px; padding-right: 4px; }
.more { width: 72px; }
.details-toggle { margin: 0 33px 0 auto; }

/* Body */
.content { flex: 1; min-height: 0; display: flex; }

.sidebar {
  flex: none;
  width: 540px;
  padding: 6px 2px 0 3px;
  border-right: 2px solid #f6f6f6;
  color: #000;
}

.sidebar ul { margin: 0; padding: 0; list-style: none; }

.sidebar a {
  display: flex;
  align-items: center;
  gap: 5px;
  height: 36px;
  padding: 0 4px 2px 36px;
  border-radius: 2px;
}

.sidebar .sub { padding-left: 48px; }
.sidebar .latin { font-size: 19px; }
.sidebar .selected { background: #d9d9d9; }
.pin { width: 16px; height: 16px; margin-left: auto; }
.sidebar hr { height: 2px; margin: 17px 11px 17px 12px; border: 0; background: #d5d5d5; }

.files { flex: 1; min-width: 0; padding-left: 23px; overflow: hidden; }
.files table { width: 1006px; border-collapse: separate; border-spacing: 0; table-layout: fixed; }
.c-name { width: 249px; }
.c-date { width: 270px; }
.c-type { width: 203px; }
.c-size { width: 135px; }
.c-tag { width: 149px; }

.files th {
  height: 49px;
  padding: 0;
  color: #4c607a;
  font-weight: 400;
  text-align: left;
  vertical-align: top;
}

.files th span {
  position: relative;
  display: block;
  height: 40px;
  padding-left: 9px;
  border-right: 1px solid #e0e0e0;
  line-height: 42px;
}

.files th:first-child span { padding-left: 5px; }
.sorted { position: absolute; top: 1px; left: 50%; width: 12px; height: 8px; margin-left: -8px; }
.files td { height: 32px; padding: 0 12px 0 9px; color: #6d6d6d; font-size: 19px; line-height: 32px; white-space: nowrap; }
.files td:first-child { display: flex; align-items: center; gap: 10px; padding-left: 8px; color: #000; }
.files td:first-child svg { width: 18px; height: 24px; }
.files td:nth-child(4) { text-align: right; }
.files .hover td { background: #e5f3ff; background-clip: padding-box; }
.files .hover td:last-child { border-right: 6px solid #fff; }

.scrollbar { flex: none; width: 25px; padding: 26px 10px 0; background: #f0f0f0; }
.thumb { height: 354px; border-radius: 3px; background: #868686; }

.details {
  flex: none;
  width: 453px;
  margin-left: 1px;
  padding-left: 2px;
  border-left: 2px solid #f6f6f6;
}

.preview {
  display: flex;
  align-items: center;
  justify-content: center;
  height: 330px;
  padding-bottom: 7px;
  background: #f9f9f9;
}

.info { padding: 38px 31px 0 32px; }
.info h2 { margin: 0 0 21px; font-size: 22px; font-weight: 600; line-height: 36px; }
.info h2 .cjk { font-size: 24px; font-weight: 700; }

.tip {
  display: flex;
  align-items: center;
  gap: 18px;
  min-height: 96px;
  padding: 0 22px 0 18px;
  border: 2px solid #efefef;
  border-radius: 8px;
}

.tip p { margin: 0; font-size: 21px; line-height: 28px; }

/* Taskbar */
.taskbar {
  flex: none;
  display: flex;
  align-items: center;
  height: 70px;
  background: linear-gradient(90deg, #eaedf1 0%, #f1f1f1 22%, #f1f2f3 50%, #f1f2f3 90%, #f0f1f3 97%, #e3e7f0 100%);
}

.apps { display: flex; margin-left: 835px; }
.app { position: relative; width: 66px; height: 70px; padding-bottom: 2px; }
.app > svg { position: relative; width: 36px; height: 36px; }

.app.run::after, .app.active::after {
  content: "";
  position: absolute;
  bottom: 7px;
  left: 50%;
  width: 9px;
  height: 5px;
  margin-left: -4px;
  border-radius: 3px;
  background: #8b8b8b;
}

.app.active::after { width: 24px; margin-left: -12px; background: #0078d4; }

.app.active::before {
  content: "";
  position: absolute;
  top: 4px;
  left: 6px;
  width: 52px;
  height: 60px;
  border: 1px solid #e4e4e4;
  border-radius: 7px;
  background: #fbfbfb;
  box-shadow: 6px 0 0 -1px #f6f6f6, 6px 0 0 0 #e2e2e2;
}

.tray { display: flex; align-items: center; margin-left: auto; padding-bottom: 2px; }
.up { width: 16px; height: 10px; }
.ime { width: 24px; height: 24px; margin-left: 28px; }
.ifly { width: 24px; height: 24px; margin-left: 33px; }
.wifi { width: 24px; height: 20px; margin-left: 33px; }
```
